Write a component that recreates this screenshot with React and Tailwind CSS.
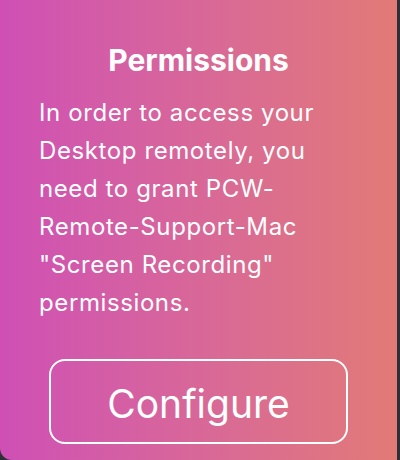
export default function App() {
  const lines = [
    'In order to access your',
    'Desktop remotely, you',
    'need to grant PCW-',
    'Remote-Support-Mac',
    '"Screen Recording"',
    'permissions.',
  ];
  return (
    <div className="w-[400px] h-[460px] bg-[#2e3038] overflow-hidden" style={{ fontFamily: 'Inter, "Noto Sans", sans-serif' }}>
      <div className="w-[397px] h-[460px] rounded-bl-[12px] bg-gradient-to-r from-[#cf4fb5] to-[#e27a76] flex flex-col items-center text-white">
        <h1 className="mt-[42px] text-[30px] leading-[36px] font-bold">Permissions</h1>
        <p className="mt-[16px] self-start pl-[39px] text-[24px] leading-[38px] tracking-[0.6px] whitespace-nowrap">
          {lines.map((l) => (
            <span key={l} className="block">{l}</span>
          ))}
        </p>
        <button className="mt-[37px] w-[299px] h-[85px] pt-[4px] border-2 border-white rounded-[16px] text-[39px] leading-none text-white flex items-center justify-center">
          Configure
        </button>
      </div>
    </div>
  );
}
